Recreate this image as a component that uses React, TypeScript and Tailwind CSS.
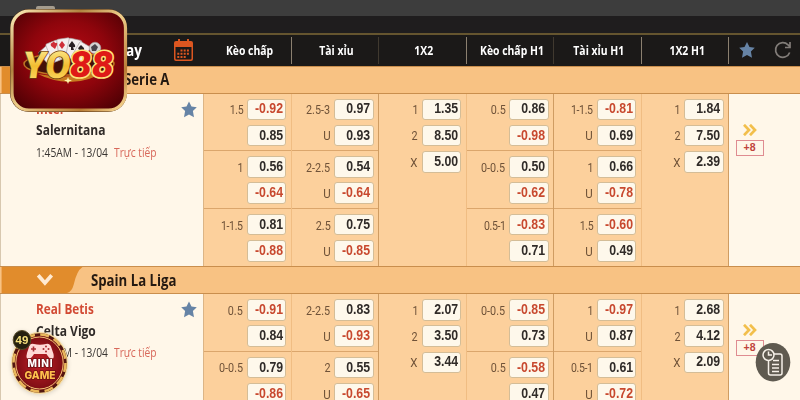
import React from "react";

type Line = [label: string, odds: string];
type Column = Line[][];

interface Match {
  home: string;
  away: string;
  time: string;
  columns: Column[];
}

const SERIE_A: Match = {
  home: "Inter",
  away: "Salernitana",
  time: "1:45AM - 13/04",
  columns: [
    [[["1.5", "-0.92"], ["", "0.85"]], [["1", "0.56"], ["", "-0.64"]], [["1-1.5", "0.81"], ["", "-0.88"]]],
    [[["2.5-3", "0.97"], ["U", "0.93"]], [["2-2.5", "0.54"], ["U", "-0.64"]], [["2.5", "0.75"], ["U", "-0.85"]]],
    [[["1", "1.35"], ["2", "8.50"], ["X", "5.00"]]],
    [[["0.5", "0.86"], ["", "-0.98"]], [["0-0.5", "0.50"], ["", "-0.62"]], [["0.5-1", "-0.83"], ["", "0.71"]]],
    [[["1-1.5", "-0.81"], ["U", "0.69"]], [["1", "0.66"], ["U", "-0.78"]], [["1.5", "-0.60"], ["U", "0.49"]]],
    [[["1", "1.84"], ["2", "7.50"], ["X", "2.39"]]],
  ],
};

const LA_LIGA: Match = {
  home: "Real Betis",
  away: "Celta Vigo",
  time: "1:45AM - 13/04",
  columns: [
    [[["0.5", "-0.91"], ["", "0.84"]], [["0-0.5", "0.79"], ["", "-0.86"]]],
    [[["2-2.5", "0.83"], ["U", "-0.93"]], [["2", "0.55"], ["U", "-0.65"]]],
    [[["1", "2.07"], ["2", "3.50"], ["X", "3.44"]]],
    [[["0-0.5", "-0.85"], ["", "0.73"]], [["0.5", "-0.58"], ["", "0.47"]]],
    [[["1", "-0.97"], ["U", "0.87"]], [["0.5-1", "0.61"], ["U", "-0.72"]]],
    [[["1", "2.68"], ["2", "4.12"], ["X", "2.09"]]],
  ],
};

const HEADINGS = ["Kèo chấp", "Tài xỉu", "1X2", "Kèo chấp H1", "Tài xỉu H1", "1X2 H1"];

function Star({ className }: { className: string }) {
  return (
    <svg viewBox="0 0 16 17" className={className} fill="#6683a5">
      <path d="M8 .5l2.500 5 5.300.7-3.900 3.900 1.100 6.200L8 13.500 3 16.300l1.100-6.200L.2 6.200l5.300-.7z" />
    </svg>
  );
}

function OddsLine({ line: [label, odds] }: { line: Line }) {
  return (
    <div className="flex h-[21.5px] items-center justify-end gap-1">
      <span
        className={`origin-right text-[13.5px] whitespace-nowrap text-[#6f5238] ${
          label.includes("1") ? "scale-x-[.78] tracking-[-0.5px]" : label === "U" || label === "X" ? "scale-x-[.85]" : "scale-x-[.8]"
        }`}
      >
        {label}
      </span>
      <span
        className={`flex h-[21.5px] w-[39.5px] shrink-0 items-center justify-end rounded-[3px] border border-[#d4bd97] bg-[#fef8eb] pr-[2.5px] font-['Liberation_Sans',sans-serif] text-[14.5px] font-bold ${
          odds.startsWith("-") ? "text-[#c8492f]" : "text-[#302b28]"
        }`}
      >
        <span className="origin-right scale-x-[.85]">{odds}</span>
      </span>
    </div>
  );
}

function OddsColumn({ column, index }: { column: Column; index: number }) {
  return (
    <div
      className={`w-[87.5px] shrink-0 border-r ${
        index === 1 || index === 3 || index === 5 ? "border-[#cf9c62]" : "border-[#f0bd83]"
      }`}
    >
      {column.map((group, i) => (
        <div
          key={i}
          className={`flex flex-col gap-[4.8px] pt-[5px] pr-[4.2px] ${
            group.length === 2 ? "h-[57.7px] border-b border-[#dba66c] last:border-b-0" : ""
          }`}
        >
          {group.map((line, j) => (
            <OddsLine key={j} line={line} />
          ))}
        </div>
      ))}
    </div>
  );
}

function LeagueBar({ name }: { name: string }) {
  return (
    <div className="flex h-[28px] shrink-0 items-center border-y border-[#c98e4d] bg-[#f8c283]">
      <svg viewBox="0 0 86 27" className="h-full w-[86px]">
        <path d="M0 0H84Q78 4 75 18Q73 26 68 27H0z" fill="#e18c2c" />
        <path d="M38 8.500l7 8L52 8.500" fill="none" stroke="#ffead2" strokeWidth="3.800" />
      </svg>
      <span className="ml-[4.5px] origin-left scale-x-[.8] font-['Open_Sans',sans-serif] text-[16.5px] font-bold whitespace-nowrap text-[#241911]">
        {name}
      </span>
    </div>
  );
}

function MatchRow({ match }: { match: Match }) {
  return (
    <div className="flex h-[172.5px] shrink-0 overflow-hidden bg-[#fcd09c]">
      <div className="flex w-[204px] shrink-0 border-r border-l border-r-[#dcb586] border-l-[#d8c8af] bg-[#fff7e9] pt-[4px] pl-[35px]">
        <div className="w-[145px] shrink-0 font-['Open_Sans',sans-serif] whitespace-nowrap">
          <p className="h-[21.5px] origin-left scale-x-[.81] text-[14.5px] leading-[21px] font-bold text-[#d24a34]">{match.home}</p>
          <p className="h-[22.5px] origin-left scale-x-[.83] text-[14.5px] leading-[21px] font-bold text-[#302b28]">{match.away}</p>
          <div className="flex h-[21px] text-[13.5px] leading-[21px] text-[#383431]">
            <span className="w-[78px] shrink-0 origin-left scale-x-[.76]">{match.time}</span>
            <span className="origin-left scale-x-[.76] text-[#d8685a]">Trực tiếp</span>
          </div>
        </div>
        <Star className="mt-[3px] h-[17px] w-[16px] shrink-0" />
      </div>
      {match.columns.map((column, i) => (
        <OddsColumn key={i} column={column} index={i} />
      ))}
      <div className="flex grow flex-col items-start bg-[#fff7e9] pt-[30px] pl-[6.5px]">
        <svg viewBox="0 0 14 12" className="ml-[7px] h-[12px] w-[14px]" fill="none" stroke="#f2bf4c" strokeWidth="2.700">
          <path d="M1 .8l5 5.200-5 5.200M7 .8l5 5.200-5 5.200" />
        </svg>
        <span className="mt-[4px] flex h-[16px] w-[28px] items-center justify-center border border-[#df8c91] font-['Liberation_Sans',sans-serif] text-[10.5px] font-bold text-[#bf443c]">
          +8
        </span>
      </div>
    </div>
  );
}

function TableHeader() {
  return (
    <div className="flex h-[33px] shrink-0 items-center border-t-2 border-[#65552f] bg-[#1b1918] font-['Open_Sans',sans-serif] font-bold text-white">
      <div className="flex w-[204px] shrink-0 items-center justify-end pr-[10px]">
        <span className="mr-[31px] origin-right scale-x-[.85] text-[16px]">Today</span>
        <svg viewBox="0 0 21 23" className="h-[23px] w-[21px]" fill="#dc5620">
          <path d="M3 2h2V0h2v2h7V0h2v2h2q2 0 2 2v16q0 2-2 2H3q-2 0-2-2V4q0-2 2-2zm-.5 6v11.500q0 1 1 1h14q1 0 1-1V8z" fillRule="evenodd" />
          <path d="M7.500 10.500h2v2h-2zm3.200 0h2v2h-2zm3.200 0h2v2h-2zM4.300 13.700h2v2h-2zm3.200 0h2v2h-2zm3.200 0h2v2h-2zm3.200 0h2v2h-2zM4.300 16.900h2v2h-2zm3.200 0h2v2h-2zm3.200 0h2v2h-2z" />
        </svg>
      </div>
      {HEADINGS.map((heading, i) => (
        <div
          key={heading}
          className={`flex h-[27px] w-[87.5px] shrink-0 items-center justify-center border-r pl-[4px] ${
            i === 1 || i === 3 ? "border-[#40392f]" : "border-[#8c8070]"
          } ${heading.startsWith("1X2") ? "pt-[2px]" : "pt-px"}`}
        >
          <span className="scale-x-[.8] text-[13px] whitespace-nowrap">{heading}</span>
        </div>
      ))}
      <div className="flex grow items-center gap-[19px] pl-[10px]">
        <Star className="h-[18px] w-[16px]" />
        <svg viewBox="0 0 18 18" className="h-[18px] w-[18px]" fill="none" stroke="#827d79" strokeWidth="1.700">
          <path d="M15.700 11.500A7.300 7.300 0 1 1 14 3.800L16 6M16 1v5.500h-5" />
        </svg>
      </div>
    </div>
  );
}

function BrandBadge() {
  return (
    <svg viewBox="0 0 120 106" className="absolute top-[6px] left-[8px] h-[106px] w-[120px]">
      <defs>
        <radialGradient id="badgeRed" cx=".5" cy=".45" r=".7">
          <stop offset="0" stopColor="#b90a14" />
          <stop offset=".5" stopColor="#8e050c" />
          <stop offset="1" stopColor="#480003" />
        </radialGradient>
        <linearGradient id="rim" x1="0" y1="0" x2="1" y2="1">
          <stop offset="0" stopColor="#ffefbb" />
          <stop offset=".3" stopColor="#b08440" />
          <stop offset=".5" stopColor="#f0cf8c" />
          <stop offset=".8" stopColor="#b87b35" />
          <stop offset="1" stopColor="#ffe09a" />
        </linearGradient>
        <linearGradient id="letters" x1="0" y1="0" x2="0" y2="1">
          <stop offset="0" stopColor="#fff4a2" />
          <stop offset=".5" stopColor="#f2bc30" />
          <stop offset="1" stopColor="#ffe176" />
        </linearGradient>
      </defs>
      <rect x="28" y="0" width="19" height="6" rx="2" fill="#a49c8e" />
      <rect x="2" y="3" width="117" height="103" rx="19" fill="#49280f" />
      <rect x="4" y="5" width="113.500" height="99" rx="17" fill="url(#badgeRed)" stroke="url(#rim)" strokeWidth="3.200" />
      <ellipse cx="61" cy="58" rx="45" ry="11" fill="#441008" stroke="#bd7523" strokeWidth="1.500" />
      <path d="M30 68Q60 74 97 65Q81 76 62 76Q43 75 30 68z" fill="#c77b20" />
      <g fill="#f4eeee" stroke="#a6a0a0" strokeWidth=".6">
        <rect x="34" y="41" width="12" height="17" rx="1.500" transform="rotate(-42 40 49)" />
        <rect x="41" y="35" width="13" height="20" rx="1.500" transform="rotate(-22 48 46)" />
        <rect x="50" y="32.500" width="13" height="20" rx="1.500" transform="rotate(-8 56 43)" />
        <rect x="59" y="33" width="13" height="20" rx="1.500" transform="rotate(12 65 44)" />
        <rect x="67" y="37" width="12" height="18" rx="1.500" transform="rotate(30 73 46)" />
        <circle cx="87" cy="42" r="5.800" fill="#d5d3d2" />
      </g>
      <path d="M83 41l4-3 3 3-2 4h-4zM89 46l3-2v4z" fill="#47434a" />
      <path d="M44 37q2-3 3 0q3-1 2 2l-2 4-4-3q-1-3 1-3zM54 35l3 4-3 4-3-4z" fill="#cf2e37" />
      <path d="M64 35l3 4q1 3-2 2l1 3h-3l0-3q-3 0-2-2zM73 39l3 3q1 3-2 2l0 3h-2l0-3q-3-1-1-3zM32 45l3 2-2 3-3-2z" fill="#292023" />
      <g className="font-['Roboto',sans-serif]" fontWeight="900" strokeLinejoin="round" paintOrder="stroke">
        <g transform="translate(9 0) skewX(-8)">
          <text x="15" y="72.500" fontSize="37" textLength="47" lengthAdjust="spacingAndGlyphs" fill="url(#letters)" stroke="#69380b" strokeWidth="1.600">YO</text>
        </g>
        <g transform="translate(7 0) skewX(-6)">
          <text x="61" y="71" fontSize="36" textLength="44" lengthAdjust="spacingAndGlyphs" fill="#df1a17" stroke="#ffe27a" strokeWidth="3">88</text>
        </g>
      </g>
      <path d="M60 71l1 2.500 3 1-3 1-1 2.500-1-2.500-3-1 3-1z" fill="#fff2ac" />
    </svg>
  );
}

function MiniGameBadge() {
  return (
    <svg viewBox="0 0 62 72" className="absolute top-[327px] left-[9px] h-[72px] w-[62px] drop-shadow-sm">
      <defs>
        <radialGradient id="chip">
          <stop offset="0" stopColor="#c32028" />
          <stop offset="1" stopColor="#780c12" />
        </radialGradient>
      </defs>
      <ellipse cx="30.500" cy="36" rx="28.500" ry="31" fill="#f8dda0" />
      <ellipse cx="30.500" cy="36" rx="26" ry="28.500" fill="url(#chip)" stroke="#51160f" strokeWidth="2.500" />
      <ellipse cx="30.500" cy="36" rx="26" ry="28.500" fill="none" stroke="#eab85c" strokeWidth="2.500" strokeDasharray="9 5.300" />
      <ellipse cx="30.500" cy="36" rx="23.700" ry="26" fill="none" stroke="#f3cb78" strokeWidth="1" />
      <path d="M25 17q6 1.500 12 0q4-1 5.500 4l2 6q1 5-2 5-2 0-5-5H25q-3 5-5.500 5-3 0-1.500-6l2-6q1-4 5-3z" fill="#ffd9d6" />
      <path d="M24.500 19.500v5M22 22h5" stroke="#a92c33" strokeWidth="1.600" />
      <g fill="#a92c33">
        <circle cx="37" cy="19.500" r="1" />
        <circle cx="37" cy="24.500" r="1" />
        <circle cx="34.500" cy="22" r="1" />
        <circle cx="39.500" cy="22" r="1" />
      </g>
      <g className="font-['Inter',sans-serif]" fontWeight="800" textAnchor="middle">
        <text x="31" y="40" fontSize="10" textLength="25" fill="#fff" stroke="#6e1014" strokeWidth="1.500" paintOrder="stroke">MINI</text>
        <text x="31" y="51.500" fontSize="11" textLength="31" lengthAdjust="spacingAndGlyphs" fill="#ffc04d" stroke="#6e1014" strokeWidth="1.500" paintOrder="stroke">GAME</text>
      </g>
      <ellipse cx="13" cy="13" rx="8.800" ry="9.500" fill="#24200f" stroke="#554a27" />
      <text x="13" y="17" fontSize="11.500" fontWeight="bold" textAnchor="middle" fill="#f6e17c" className="font-['Liberation_Sans',sans-serif]">49</text>
    </svg>
  );
}

function BetListButton() {
  return (
    <svg viewBox="0 0 36 40" className="absolute top-[342px] left-[755px] h-[40px] w-[36px]" fill="none" stroke="#f6f0e8" strokeWidth="1.500">
      <ellipse cx="18" cy="20.200" rx="17.300" ry="19.200" fill="#5f5a50" stroke="none" />
      <path d="M19 12h6q2 0 2 2v17q0 2-2 2H15.500q-2 0-2-2V19M18 18.500h6M17 22.500h7M17 26h7M17 29.500h7" />
      <circle cx="13.500" cy="13" r="5.500" fill="#5f5a50" />
      <path d="M13.500 9.500v3.500h3.500" />
    </svg>
  );
}

export default function App() {
  return (
    <main className="relative flex h-[400px] w-[800px] flex-col overflow-hidden bg-[#fcd09c] font-['Roboto','Liberation_Sans',sans-serif]">
      <div className="h-[16px] shrink-0 bg-[#3d3d3d]" />
      <div className="h-[16.5px] shrink-0 bg-[#1f1d1e]" />
      <TableHeader />
      <LeagueBar name="Italy Serie A" />
      <MatchRow match={SERIE_A} />
      <LeagueBar name="Spain La Liga" />
      <MatchRow match={LA_LIGA} />
      <BrandBadge />
      <MiniGameBadge />
      <BetListButton />
    </main>
  );
}
